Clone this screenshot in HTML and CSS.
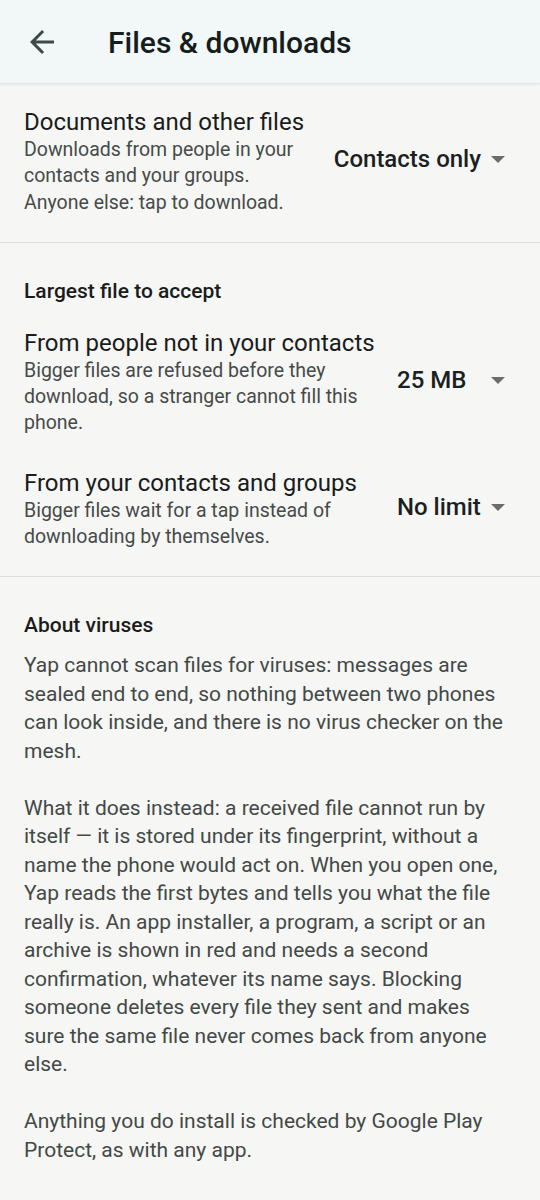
FILE: index.html
```html
<!DOCTYPE html>
<html>
	<head>
		<meta charset="utf-8">
		<title>Files &amp; downloads</title>
		<link rel="stylesheet" href="styles.css">
	</head>
	<body>
		<div class="topbar">
			<div class="back">
				<svg width="36" height="36" viewBox="0 0 24 24"><path d="M20 11H7.83l5.59-5.59L12 4l-8 8 8 8 1.41-1.41L7.83 13H20v-2z" fill="#3f4947"/></svg>
			</div>
			<div class="titre">Files &amp; downloads</div>
		</div>

		<div class="section first">
			<div class="row">
				<div class="texte">
					<div class="label">Documents and other files</div>
					<div class="sous">Downloads from people in your contacts and your groups.<br>Anyone else: tap to download.</div>
				</div>
				<div class="choix">
					<span class="valeur">Contacts only</span>
					<svg class="fleche" width="14" height="7" viewBox="0 0 14 7"><path d="M0 0h14L7 7z" fill="#6a6d6c"/></svg>
				</div>
			</div>
		</div>

		<div class="section">
			<div class="entete">Largest file to accept</div>
			<div class="row">
				<div class="texte">
					<div class="label">From people not in your contacts</div>
					<div class="sous">Bigger files are refused before they download, so a stranger cannot fill this phone.</div>
				</div>
				<div class="choix">
					<span class="valeur">25 MB</span>
					<svg class="fleche" width="14" height="7" viewBox="0 0 14 7"><path d="M0 0h14L7 7z" fill="#6a6d6c"/></svg>
				</div>
			</div>
			<div class="row">
				<div class="texte">
					<div class="label">From your contacts and groups</div>
					<div class="sous">Bigger files wait for a tap instead of downloading by themselves.</div>
				</div>
				<div class="choix">
					<span class="valeur">No limit</span>
					<svg class="fleche" width="14" height="7" viewBox="0 0 14 7"><path d="M0 0h14L7 7z" fill="#6a6d6c"/></svg>
				</div>
			</div>
		</div>

		<div class="section last">
			<div class="entete">About viruses</div>
			<div class="info">
				<p>Yap cannot scan files for viruses: messages are sealed end to end, so nothing between two phones can look inside, and there is no virus checker on the mesh.</p>
				<p>What it does instead: a received file cannot run by itself — it is stored under its fingerprint, without a name the phone would act on. When you open one, Yap reads the first bytes and tells you what the file really is. An app installer, a program, a script or an archive is shown in red and needs a second confirmation, whatever its name says. Blocking someone deletes every file they sent and makes sure the same file never comes back from anyone else.</p>
				<p>Anything you do install is checked by Google Play Protect, as with any app.</p>
			</div>
		</div>
	</body>
</html>
```

FILE: styles.css
```css
body{
	margin:0;
	font-family:Roboto, "Noto Sans", sans-serif;
	background-color:#f6f6f4;
	color:#1a1c1c;
}
div.topbar{
	height:83px;
	display:flex;
	align-items:center;
	background-color:#f2f8f7;
	border-bottom:1px solid #e2e6e5;
	box-shadow:0 1px 2px rgba(0,0,0,0.05);
}
div.back{
	width:36px;
	height:36px;
	margin-left:24px;
}
div.back svg{
	display:block;
}
div.titre{
	margin-left:48px;
	font-size:30px;
	font-weight:500;
	color:#171d1c;
	padding-top:2px;
}
div.section{
	border-bottom:1px solid #dcdfdd;
	padding:36px 0 10px;
}
div.section.first{
	padding:8px 0 10px;
}
div.section.last{
	border-bottom:none;
}
div.entete{
	padding:0 24px;
	font-size:21px;
	font-weight:500;
	line-height:24px;
	color:#1a1c1c;
	margin-bottom:10px;
}
div.row{
	display:flex;
	align-items:center;
	padding:16px 24px;
	gap:16px;
}
div.texte{
	flex:1;
}
div.label{
	font-size:24px;
	line-height:28px;
	color:#1a1c1c;
}
div.sous{
	margin-top:1px;
	font-size:19.5px;
	line-height:26.3px;
	color:#464b4a;
}
div.choix{
	display:flex;
	align-items:center;
	padding-right:11px;
	padding-bottom:5px;
}
span.valeur{
	min-width:84px;
	font-size:24px;
	font-weight:500;
	color:#1b1f1f;
}
svg.fleche{
	margin-left:10px;
	display:block;
}
div.info{
	padding:4px 30px 0 24px;
	font-size:21px;
	line-height:28.5px;
	color:#434947;
}
div.info p{
	margin:0 0 28.5px;
}
```
